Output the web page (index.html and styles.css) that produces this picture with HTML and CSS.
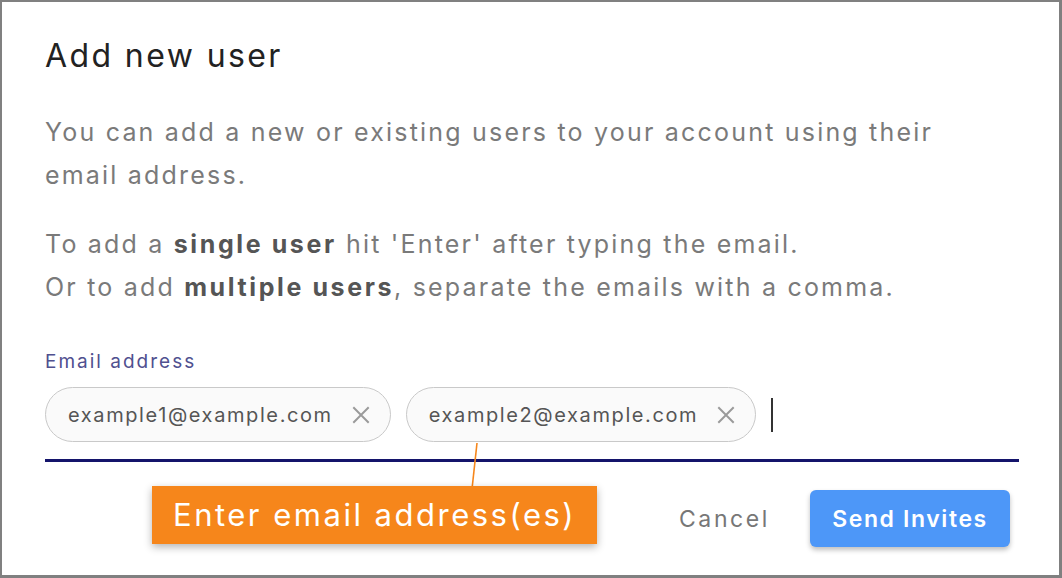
FILE: index.html
```html
<!DOCTYPE html>
<html lang="en">
<head>
  <meta charset="UTF-8">
  <meta name="viewport" content="width=device-width, initial-scale=1.0">
  <title>Add new user</title>
  <link rel="stylesheet" href="styles.css">
</head>
<body>

  <div class="frame">
    <div class="dialog">
      <h1 class="dialog-title">Add new user</h1>

      <p class="intro">You can add a new or existing users to your account using their email address.</p>

      <p class="intro">To add a <strong>single user</strong> hit 'Enter' after typing the email.<br>
        Or to add <strong>multiple users</strong>, separate the emails with a comma.</p>

      <!-- Email chips field -->
      <div class="email-field">
        <label class="field-label">Email address</label>
        <div class="chip-row">
          <span class="chip">example1@example.com
            <svg class="chip-close" viewBox="0 0 20 20"><path d="M3 3 L17 17 M17 3 L3 17"/></svg>
          </span>
          <span class="chip">example2@example.com
            <svg class="chip-close" viewBox="0 0 20 20"><path d="M3 3 L17 17 M17 3 L3 17"/></svg>
          </span>
          <span class="caret"></span>
        </div>
      </div>

      <div class="dialog-actions">
        <button class="btn-cancel" type="button">Cancel</button>
        <button class="btn-send" type="button">Send Invites</button>
      </div>

      <!-- Annotation callout -->
      <svg class="callout-line" viewBox="0 0 20 60"><path d="M13 1 L8 47"/></svg>
      <div class="callout">Enter email address(es)</div>
    </div>
  </div>

</body>
</html>
```

FILE: styles.css
```css
* {
  box-sizing: border-box;
  margin: 0;
  padding: 0;
}

body {
  font-family: Inter, 'Noto Sans', sans-serif;
  background: #fff;
}

.frame {
  width: 1062px;
  height: 578px;
  border: 2px solid #808080;
  border-right-width: 3px;
  border-bottom-width: 3px;
  background: #fff;
}

.dialog {
  position: relative;
  height: 100%;
  padding: 33px 40px 0 43px;
}

.dialog-title {
  font-size: 32px;
  font-weight: 400;
  letter-spacing: 2.4px;
  color: #222;
  line-height: 42px;
  margin-bottom: 34px;
}

.intro {
  max-width: 960px;
  font-size: 25px;
  letter-spacing: 2.2px;
  line-height: 43px;
  color: #7a7a7a;
  margin-bottom: 26px;
}

.intro strong {
  color: #555;
  font-weight: 700;
  letter-spacing: 2.6px;
}

.email-field {
  margin-top: 41px;
  border-bottom: 3px solid #14146b;
  padding-bottom: 17px;
}

.field-label {
  display: block;
  font-size: 19px;
  letter-spacing: 2px;
  color: #50508f;
  line-height: 24px;
  margin-bottom: 13px;
}

.chip-row {
  display: flex;
  align-items: center;
  gap: 15px;
}

.chip {
  display: inline-flex;
  align-items: center;
  height: 55px;
  padding: 0 18px 0 22px;
  border: 1.5px solid #c9c9c9;
  border-radius: 28px;
  background: #fafafa;
  font-size: 20px;
  letter-spacing: 1.6px;
  color: #555;
}

.chip-close {
  width: 22px;
  height: 22px;
  margin-left: 17px;
  fill: none;
  stroke: #9a9a9a;
  stroke-width: 1.8;
}

.caret {
  width: 2px;
  height: 34px;
  background: #333;
}

.dialog-actions {
  display: flex;
  justify-content: flex-end;
  align-items: center;
  gap: 40px;
  margin-top: 28px;
  margin-right: 9px;
}

.btn-cancel {
  background: none;
  border: none;
  font-family: inherit;
  font-size: 23px;
  letter-spacing: 2.6px;
  color: #777;
  cursor: pointer;
}

.btn-send {
  width: 200px;
  height: 57px;
  border: none;
  border-radius: 6px;
  background: #4d97f8;
  color: #fff;
  font-family: inherit;
  font-size: 23px;
  font-weight: 600;
  letter-spacing: 1.6px;
  box-shadow: 0 3px 5px rgba(0, 0, 0, 0.25);
  cursor: pointer;
}

.callout-line {
  position: absolute;
  left: 462px;
  top: 440px;
  width: 20px;
  height: 60px;
  fill: none;
  stroke: #f6861b;
  stroke-width: 1.6;
}

.callout {
  position: absolute;
  left: 150px;
  top: 484px;
  width: 445px;
  height: 58px;
  padding-left: 21px;
  background: #f6861b;
  color: #fff;
  font-size: 31px;
  letter-spacing: 2.5px;
  line-height: 58px;
  box-shadow: 0 3px 8px rgba(0, 0, 0, 0.3);
}
```
